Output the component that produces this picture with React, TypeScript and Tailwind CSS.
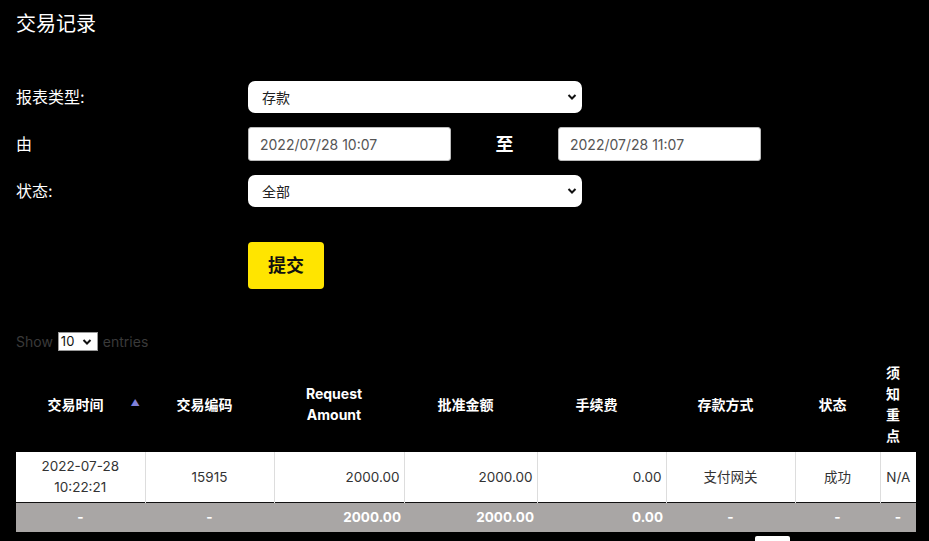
import React from "react";

const font = { fontFamily: '"Inter", "Noto Sans CJK SC", sans-serif' };

function Chevron() {
  return (
    <svg width="10" height="8" viewBox="0 0 10 8" className="pointer-events-none absolute right-[5px] top-1/2 -translate-y-1/2">
      <path d="M1.5 2 L5 5.5 L8.5 2" fill="none" stroke="#111" strokeWidth="2" />
    </svg>
  );
}

function Select({ value }: { value: string }) {
  return (
    <div className="relative w-[334px] h-[32px] bg-white rounded-[7px] flex items-center pl-[14px] text-[14px] text-[#222]">
      {value}
      <Chevron />
    </div>
  );
}

function DateInput({ value }: { value: string }) {
  return (
    <div className="w-[203px] h-[34px] bg-white rounded-[3px] border border-[#bbb] flex items-center pl-[11px] text-[14px] text-[#555]">
      {value}
    </div>
  );
}

export default function App() {
  const th = "text-white font-bold text-[14px] leading-[21px] text-center align-middle pl-[2px] pr-[12px] pb-[5px]";
  const td = "text-[13.5px] leading-[21px] text-[#333] border-r border-[#ddd] px-[4px] py-[4px]";
  const tf = "text-white font-bold text-[13.5px] leading-[21px] px-[3px] h-[29px]";
  return (
    <div className="w-[929px] h-[541px] overflow-hidden bg-black" style={font}>
      <div className="px-[16px] pt-[12px]">
        <div className="text-white text-[20px] leading-[24px]">交易记录</div>
        <div className="mt-[45px] flex flex-col gap-[14px]">
          <div className="flex items-center">
            <div className="w-[232px] text-white text-[16px]">报表类型:</div>
            <Select value="存款" />
          </div>
          <div className="flex items-center">
            <div className="w-[232px] text-white text-[16px]">由</div>
            <DateInput value="2022/07/28 10:07" />
            <div className="w-[107px] text-center text-white font-bold text-[18px]">至</div>
            <DateInput value="2022/07/28 11:07" />
          </div>
          <div className="flex items-center">
            <div className="w-[232px] text-white text-[16px]">状态:</div>
            <Select value="全部" />
          </div>
        </div>
        <div className="mt-[35px] ml-[232px] w-[76px] h-[47px] bg-[#ffe500] rounded-[4px] flex items-center justify-center text-[18px] font-bold text-[#111]">
          提交
        </div>
        <div className="mt-[43px] flex items-center text-[14px] text-[#3a3a3a] h-[19px]">
          <span>Show</span>
          <div className="relative mx-[5px] w-[40px] h-[19px] bg-white border border-[#999] flex items-center pl-[2px] text-[13px] text-[#111]">
            10
            <Chevron />
          </div>
          <span>entries</span>
        </div>
        <table className="mt-[10px] w-[900px] border-collapse table-fixed">
          <colgroup>
            <col className="w-[129px]" />
            <col className="w-[129px]" />
            <col className="w-[130px]" />
            <col className="w-[133px]" />
            <col className="w-[129px]" />
            <col className="w-[129px]" />
            <col className="w-[85px]" />
            <col className="w-[36px]" />
          </colgroup>
          <thead>
            <tr className="h-[91px]">
              <th className={th + " relative"}>
                交易时间
                <span className="absolute right-[5px] top-1/2 -translate-y-[15px] text-[9px] text-[#8080d8]">▲</span>
              </th>
              <th className={th}>交易编码</th>
              <th className={th}>Request<br />Amount</th>
              <th className={th}>批准金额</th>
              <th className={th}>手续费</th>
              <th className={th}>存款方式</th>
              <th className={th}>状态</th>
              <th className={th}>须<br />知<br />重<br />点</th>
            </tr>
          </thead>
          <tbody>
            <tr className="bg-white h-[50px] border-b border-[#111]">
              <td className={td + " text-center"}>2022-07-28<br />10:22:21</td>
              <td className={td + " text-center"}>15915</td>
              <td className={td + " text-right"}>2000.00</td>
              <td className={td + " text-right"}>2000.00</td>
              <td className={td + " text-right"}>0.00</td>
              <td className={td + " text-center"}>支付网关</td>
              <td className={td + " text-center"}>成功</td>
              <td className={td + " text-center border-r-0"}>N/A</td>
            </tr>
          </tbody>
          <tfoot>
            <tr className="bg-[#a9a6a5]">
              <td className={tf + " text-center"}>-</td>
              <td className={tf + " text-center"}>-</td>
              <td className={tf + " text-right"}>2000.00</td>
              <td className={tf + " text-right"}>2000.00</td>
              <td className={tf + " text-right"}>0.00</td>
              <td className={tf + " text-center"}>-</td>
              <td className={tf + " text-center"}>-</td>
              <td className={tf + " text-center"}>-</td>
            </tr>
          </tfoot>
        </table>
        <div className="mt-[4px] ml-[739px] w-[35px] h-[20px] bg-white rounded-[2px]" />
      </div>
    </div>
  );
}
